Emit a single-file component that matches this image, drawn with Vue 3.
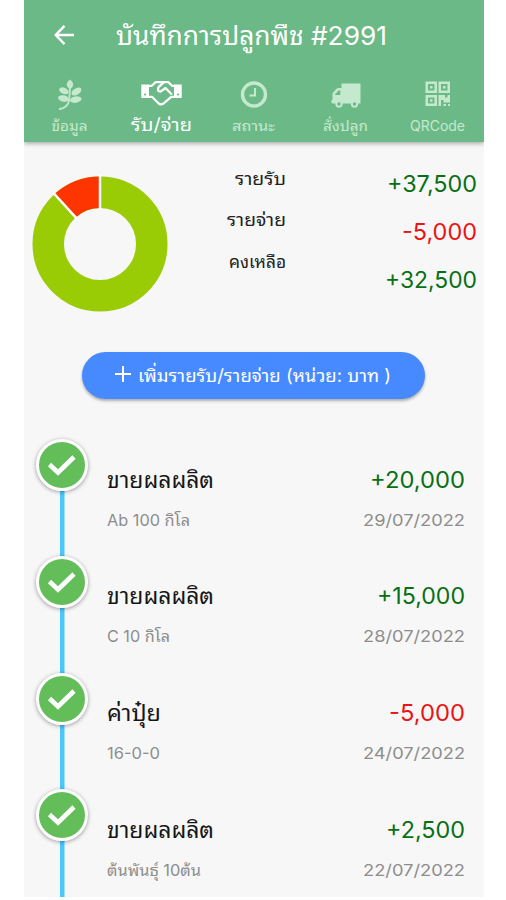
<script setup>
const tabs = [
  { id: 'info', label: 'ข้อมูล', width: 36 },
  { id: 'money', label: 'รับ/จ่าย', width: 61, active: true },
  { id: 'status', label: 'สถานะ', width: 43 },
  { id: 'order', label: 'สั่งปลูก', width: 45 },
  { id: 'qr', label: 'QRCode', width: 55 },
]
const labels = [
  { text: 'รายรับ', width: 51 },
  { text: 'รายจ่าย', width: 59 },
  { text: 'คงเหลือ', width: 57 },
]
const totals = [
  { text: '+37,500', width: 90, tone: 'plus' },
  { text: '-5,000', width: 75, tone: 'minus' },
  { text: '+32,500', width: 92, tone: 'plus' },
]
const entries = [
  { title: 'ขายผลผลิต', tw: 107, note: 'Ab 100 กิโล', nw: 83, amount: '+20,000', aw: 95, date: '29/07/2022', tone: 'plus' },
  { title: 'ขายผลผลิต', tw: 107, note: 'C 10 กิโล', nw: 63, amount: '+15,000', aw: 88, date: '28/07/2022', tone: 'plus' },
  { title: 'ค่าปุ๋ย', tw: 54, note: '16-0-0', nw: 53, amount: '-5,000', aw: 76, date: '24/07/2022', tone: 'minus' },
  { title: 'ขายผลผลิต', tw: 107, note: 'ต้นพันธุ์ 10ต้น', nw: 94, amount: '+2,500', aw: 79, date: '22/07/2022', tone: 'plus' },
]
</script>

<template>
  <main class="screen">
    <header class="header">
      <div class="titlebar">
        <svg class="back" viewBox="0 0 22 22"><path d="M21 11H2M11 1.5 1.8 11l9.2 9.5" /></svg>
        <svg class="line title" width="272" height="48"><text x="0" y="33.500" textLength="271" lengthAdjust="spacingAndGlyphs">บันทึกการปลูกพืช #2991</text></svg>
      </div>
      <nav class="tabs">
        <div v-for="t in tabs" :key="t.id" class="tab" :class="{ active: t.active }">
          <svg v-if="t.id === 'info'" class="icon" width="26" height="32" viewBox="0 0 26 32">
            <path class="stroke" d="M2 30c5 0 9.500-3.500 10.300-9L13 7" />
            <path d="M13 .5c-4.500 3.500-4.300 7 0 9.500 4.300-2.500 4.300-6 0-9.500Z" />
            <ellipse cx="6.800" cy="11.800" rx="5" ry="3" transform="rotate(25 6.800 11.800)" />
            <ellipse cx="19.400" cy="12.600" rx="5.500" ry="3.200" transform="rotate(-33 19.400 12.600)" />
            <ellipse cx="6.500" cy="19.500" rx="5.500" ry="3.200" transform="rotate(12 6.500 19.500)" />
            <ellipse cx="18.800" cy="20.600" rx="5.800" ry="3.200" transform="rotate(-10 18.800 20.600)" />
          </svg>
          <svg v-else-if="t.id === 'money'" class="icon" width="41" height="32" viewBox="0 0 41 32">
            <path d="M.3 5.500h7.700v13.500H.3ZM33 5.500h7.700v13.500H33Z" />
            <path class="outline" d="M8 6.800h2.800L14.500 3.200h13L31 6.800h2.500M8 17.800h3l6.700 6.700q2.300 1.800 4.800 0l7.800-6.700h3.200M23 3.200l-5.500 5q-1.700 4.300 2 4.500l5-3.700 6.300 6.500" />
            <circle class="dot" cx="4" cy="15.500" r="1.100" /><circle class="dot" cx="37" cy="15.500" r="1.100" />
          </svg>
          <svg v-else-if="t.id === 'status'" class="icon" width="28" height="32" viewBox="0 0 28 32">
            <circle class="ring" cx="14" cy="15.500" r="11.500" /><path class="hand" d="M15 9v7.500H9.500" />
          </svg>
          <svg v-else-if="t.id === 'order'" class="icon" width="30" height="32" viewBox="0 0 30 32">
            <path fill-rule="evenodd" d="M10.500 4.500h19v20h-27A2 2 0 0 1 .3 23v-1.500L1.500 21v-6q0-1 .8-1.800l3.300-3.400Q6.300 9 7.500 9h3ZM9.300 11.500H7.600l-3.400 3.700v.8h5.100Z" />
            <circle class="wheel" cx="8" cy="25" r="2.700" /><circle class="wheel" cx="23.500" cy="25" r="2.700" />
          </svg>
          <svg v-else class="icon" width="26" height="32" viewBox="0 0 26 32">
            <path fill-rule="evenodd" d="M.5 2.500h11.500V14H.5ZM3 5v6.500h6.500V5ZM13.500 2.500H25V14H13.500ZM16 5v6.500h6.500V5ZM.5 16h11.500v11H.5ZM3 18.500v6h6.500v-6ZM5 7h2.500v2.500H5ZM18 7h2.500v2.500H18ZM5 20.300h2.500v2.500H5ZM13.500 16h6.500v2.500h2.500V16H25v7.500h-6.500V21h-2.500v6h-2.500ZM18.500 25H21v2h-2.500ZM23 25h2v2h-2Z" />
          </svg>
          <svg class="line tablabel" width="80" height="28"><text x="39.500" y="20" text-anchor="middle" :textLength="t.width" lengthAdjust="spacingAndGlyphs">{{ t.label }}</text></svg>
        </div>
      </nav>
    </header>

    <section class="summary">
      <svg class="donut" width="138" height="138" viewBox="-69 -69 138 138">
        <circle class="income" r="51.750" />
        <path class="expense" d="M0-67.500A67.500 67.500 0 0 0-45.470-49.900L-24.250-26.600A36 36 0 0 1 0-36Z" />
        <path class="gap" d="M0-69V-35M-46.500-51-23.600-25.900" />
      </svg>
      <div class="labels">
        <svg v-for="l in labels" :key="l.text" class="line label" width="80" height="41.300"><text x="80" y="25.500" text-anchor="end" :textLength="l.width" lengthAdjust="spacingAndGlyphs">{{ l.text }}</text></svg>
      </div>
      <div class="totals">
        <svg v-for="a in totals" :key="a.text" class="line amount" :class="a.tone" width="100" height="48"><text x="100" y="32.500" text-anchor="end" :textLength="a.width" lengthAdjust="spacingAndGlyphs">{{ a.text }}</text></svg>
      </div>
    </section>

    <button class="add">
      <svg class="plusicon" width="16" height="16" viewBox="0 0 16 16"><path d="M8 0v16M0 8h16" /></svg>
      <svg class="line addlabel" width="253" height="40"><text x="0" y="26" textLength="253" lengthAdjust="spacingAndGlyphs">เพิ่มรายรับ/รายจ่าย (หน่วย: บาท )</text></svg>
    </button>

    <section class="timeline">
      <article v-for="(e, i) in entries" :key="i" class="entry">
        <div class="rail">
          <span class="badge"><svg width="30" height="24" viewBox="0 0 30 24"><path d="m2.500 11.500 8.500 8L27 4" /></svg></span>
        </div>
        <div class="texts">
          <svg class="line name" width="150" height="44"><text x="0" y="30" :textLength="e.tw" lengthAdjust="spacingAndGlyphs">{{ e.title }}</text></svg>
          <svg class="line note" width="150" height="36"><text x="0" y="24" :textLength="e.nw" lengthAdjust="spacingAndGlyphs">{{ e.note }}</text></svg>
        </div>
        <div class="values">
          <svg class="line amount" :class="e.tone" width="110" height="44"><text x="110" y="30" text-anchor="end" :textLength="e.aw" lengthAdjust="spacingAndGlyphs">{{ e.amount }}</text></svg>
          <svg class="line note" width="110" height="36"><text x="110" y="24" text-anchor="end" textLength="102" lengthAdjust="spacingAndGlyphs">{{ e.date }}</text></svg>
        </div>
      </article>
    </section>
  </main>
</template>

<style>
body { background: #fff; overflow: hidden; }
</style>

<style scoped>
.screen {
  box-sizing: border-box;
  width: 459.5px;
  height: 897px;
  margin-left: 24px;
  overflow: hidden;
  background: #f7f7f7;
  font-family: Inter, "Noto Sans Thai Looped", "Noto Looped Thai", Sarabun, Loma, Garuda, Waree, Umpush, Laksaman, "Noto Serif Thai", "Noto Sans Thai", sans-serif;
}
svg { display: block; flex: none; }
.line { overflow: visible; fill: currentColor; }
.header {
  height: 142px;
  background: #6bb987;
  color: #fff;
  box-shadow: 0 2px 4px rgba(0, 0, 0, .28);
}
.titlebar { display: flex; padding: 11px 0 0 30px; }
.back { width: 21px; height: 22px; margin-top: 13px; fill: none; stroke: #fff; stroke-width: 2.5; }
.title { margin-left: 41px; font-size: 26px; }
.tabs { display: flex; padding-top: 20px; }
.tab { flex: 1; display: flex; flex-direction: column; align-items: center; color: #c5e9cd; }
.tab.active { color: #fff; }
.icon { fill: currentColor; }
.stroke { fill: none; stroke: currentColor; stroke-width: 1.8; }
.outline { fill: none; stroke: currentColor; stroke-width: 2.3; stroke-linejoin: round; }
.dot { fill: #6bb987; }
.ring { fill: none; stroke: currentColor; stroke-width: 3.4; }
.hand { fill: none; stroke: currentColor; stroke-width: 2; }
.wheel { fill: #6bb987; stroke: currentColor; stroke-width: 2; }
.tablabel { font-size: 14px; }
.active .tablabel { font-size: 18px; }
.summary { display: flex; height: 209px; box-sizing: border-box; padding-top: 17px; }
.donut { margin: 16px 0 0 7.200px; }
.income { fill: none; stroke: #99cc05; stroke-width: 31.5; }
.expense { fill: #ff3500; }
.gap { stroke: #fff; stroke-width: 2.5; }
.labels { margin-left: 36.500px; color: #222; font-size: 18px; }
.totals { margin-left: 91.500px; }
.amount { font-size: 23px; }
.plus { color: #087014; }
.minus { color: #ea1414; }
.add {
  display: flex;
  align-items: center;
  width: 343px;
  height: 47px;
  margin: 1px 0 0 58px;
  padding: 0 0 0 33px;
  border: 0;
  border-radius: 24px;
  background: #478aff;
  color: #fff;
  font-family: inherit;
  box-shadow: 0 2px 3px rgba(0, 0, 0, .3);
}
.plusicon { stroke: #fff; stroke-width: 2; margin-top: -3px; }
.addlabel { margin-left: 7px; font-size: 18px; }
.timeline { padding-top: 40px; }
.entry { display: flex; height: 116.800px; }
.rail {
  width: 52px;
  margin-left: 12px;
  background: linear-gradient(#4cc7fb, #4cc7fb) 23.500px 0 / 4.500px 100% no-repeat;
}
.entry:first-child .rail { background-position: 23.500px 26px; }
.badge {
  display: flex;
  align-items: center;
  justify-content: center;
  box-sizing: border-box;
  width: 52px;
  height: 52px;
  border: 3px solid #fff;
  border-radius: 50%;
  background: #63be59;
  box-shadow: 0 1px 4px rgba(0, 0, 0, .38);
}
.badge path { fill: none; stroke: #fff; stroke-width: 4.6; }
.texts { margin: 18.500px 0 0 19px; color: #161616; }
.name { font-size: 23px; }
.note { font-size: 16.500px; color: #8d8d8d; }
.values { margin: 18.500px 0 0 97.500px; }
</style>
